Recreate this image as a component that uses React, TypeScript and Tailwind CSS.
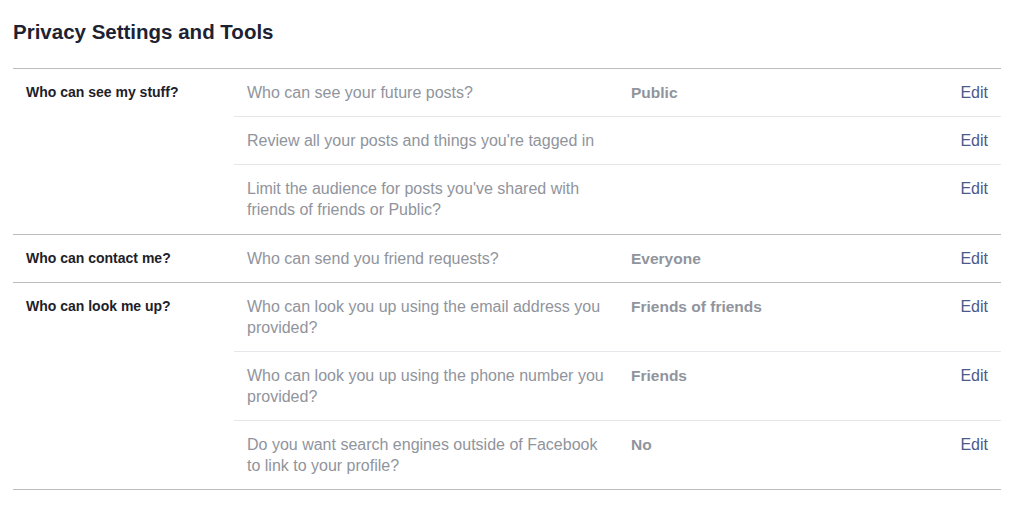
const SECTIONS = [
  {
    label: "Who can see my stuff?",
    rows: [
      { text: "Who can see your future posts?", value: "Public" },
      { text: "Review all your posts and things you're tagged in", value: "" },
      {
        text: "Limit the audience for posts you've shared with friends of friends or Public?",
        value: "",
      },
    ],
  },
  {
    label: "Who can contact me?",
    rows: [{ text: "Who can send you friend requests?", value: "Everyone" }],
  },
  {
    label: "Who can look me up?",
    rows: [
      {
        text: "Who can look you up using the email address you provided?",
        value: "Friends of friends",
      },
      {
        text: "Who can look you up using the phone number you provided?",
        value: "Friends",
      },
      {
        text: "Do you want search engines outside of Facebook to link to your profile?",
        value: "No",
      },
    ],
  },
];

export default function App() {
  return (
    <div className="min-h-[521px] bg-white font-['Liberation_Sans',Arial,sans-serif]">
      <div className="w-[988px] pl-[13px] box-content">
        <h1 className="pt-[18px] pb-[22px] text-[20.5px] leading-[28px] font-bold text-[#1d2233]">
          Privacy Settings and Tools
        </h1>

        <div className="border-t border-b border-[#bcbcbc]">
          {SECTIONS.map((section, i) => (
            <div
              key={section.label}
              className={`flex ${i > 0 ? "border-t border-[#bcbcbc]" : "pb-[1px]"}`}
            >
              <div className="w-[221px] shrink-0 pl-[13px] pt-[13px] text-[14px] leading-[21px] font-bold text-[#1d2129]">
                {section.label}
              </div>
              <div className="flex-1">
                {section.rows.map((row, j) => (
                  <div
                    key={row.text}
                    className={`flex pt-[13px] pb-[13px] pl-[13px] pr-[13px] text-[16px] leading-[21px] ${
                      j > 0 ? "border-t border-[#e6e7ea]" : ""
                    }`}
                  >
                    <div className="w-[362px] shrink-0 text-[#90949c]">{row.text}</div>
                    <div className="ml-[22px] flex-1 font-bold text-[#90949c] text-[15.5px]">
                      {row.value}
                    </div>
                    <a href="#" className="text-[#4b5a8a]">
                      Edit
                    </a>
                  </div>
                ))}
              </div>
            </div>
          ))}
        </div>
      </div>
    </div>
  );
}
